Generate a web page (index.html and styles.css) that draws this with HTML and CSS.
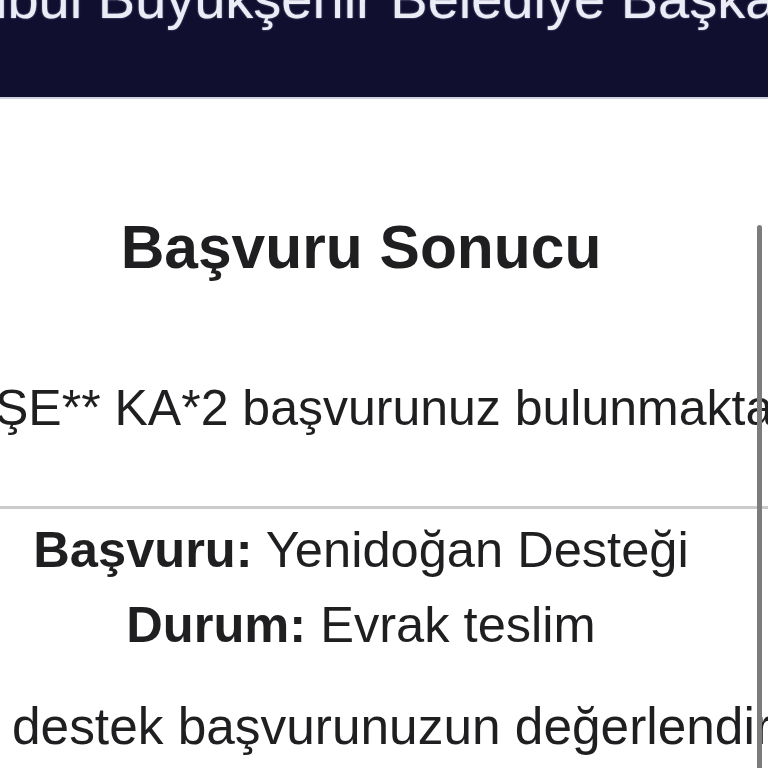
FILE: index.html
```html
<!DOCTYPE html>
<html lang="tr">
<head>
<meta charset="utf-8">
<title>Başvuru Sonucu</title>
<link rel="stylesheet" href="styles.css">
</head>
<body>
<header class="topbar">
  <div class="topbar-title">İstanbul Büyükşehir Belediye Başkanlığı</div>
</header>
<main class="page">
  <h1 class="title">Başvuru Sonucu</h1>
  <p class="message">AYŞE** KA*2 başvurunuz bulunmaktadır.</p>
  <hr class="divider">
  <p class="info-row"><strong>Başvuru:</strong> Yenidoğan Desteği</p>
  <p class="info-row info-row--second"><strong>Durum:</strong> Evrak teslim</p>
  <p class="note">destek başvurunuzun değerlendirilmesi devam etmektedir.</p>
  <div class="scrollbar"></div>
</main>
</body>
</html>
```
FILE: styles.css
```css
html, body {
  margin: 0;
  padding: 0;
  background: #ffffff;
  overflow: hidden;
  height: 768px;
}
body {
  font-family: "Liberation Sans", Arial, sans-serif;
  color: #1f1f21;
}
.topbar {
  height: 97px;
  background: #100f30;
  border-bottom: 2px solid #d2d2de;
  overflow: hidden;
}
.topbar-title {
  margin-top: -29px;
  font-size: 56px;
  line-height: 56px;
  white-space: nowrap;
  text-indent: -114px;
  color: #ececf6;
  text-shadow: 0 0 2px rgba(220, 220, 255, 0.6);
}
.page {
  position: relative;
  height: 669px;
  overflow: hidden;
}
.title {
  width: 722px;
  margin: 118px 0 0;
  font-size: 60.5px;
  line-height: 60px;
  font-weight: 700;
  text-align: center;
}
.message {
  margin: 106px 0 0;
  font-size: 50px;
  line-height: 50px;
  white-space: nowrap;
  text-indent: -68px;
}
.divider {
  margin: 73px 0 0;
  border: 0;
  height: 3px;
  background: #cbcbcb;
}
.info-row {
  width: 722px;
  margin: 16px 0 0;
  font-size: 50.6px;
  line-height: 50px;
  text-align: center;
  white-space: nowrap;
}
.info-row strong {
  font-weight: 700;
}
.info-row--second {
  margin-top: 25px;
}
.note {
  margin: 51px 0 0;
  font-size: 51.4px;
  line-height: 50px;
  white-space: nowrap;
  text-indent: 12px;
}
.scrollbar {
  position: absolute;
  top: 126px;
  left: 757px;
  width: 5px;
  height: 600px;
  border-radius: 3px;
  background: #7c7c7c;
}
```
